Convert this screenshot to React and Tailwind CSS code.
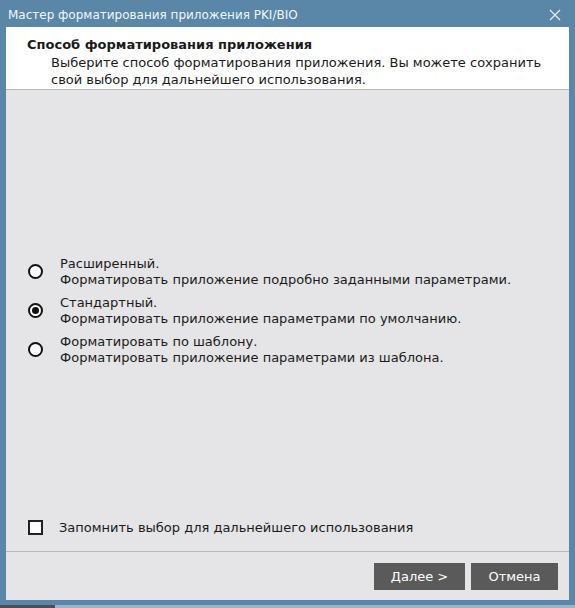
import { useState } from 'react'

const font = { fontFamily: '"DejaVu Sans", "Noto Sans", sans-serif' }

const options = [
  { id: 'ext', title: 'Расширенный.', desc: 'Форматировать приложение подробно заданными параметрами.' },
  { id: 'std', title: 'Стандартный.', desc: 'Форматировать приложение параметрами по умолчанию.' },
  { id: 'tpl', title: 'Форматировать по шаблону.', desc: 'Форматировать приложение параметрами из шаблона.' },
]

function Radio({ checked }) {
  return (
    <span className="w-[15px] h-[15px] rounded-full border-2 border-[#111] bg-white flex items-center justify-center shrink-0">
      {checked && <span className="w-[7px] h-[7px] rounded-full bg-[#111]" />}
    </span>
  )
}

export default function App() {
  const [mode, setMode] = useState('std')
  const [remember, setRemember] = useState(false)

  return (
    <div className="w-[575px] h-[608px] bg-[#5a87a8] flex flex-col text-[13px] text-[#1a1a1a]" style={font}>
      {/* заголовок окна */}
      <div className="h-[27px] flex items-center justify-between pl-[8px] pr-[14px] text-white/95 text-[12px] shrink-0">
        <span className="pt-[2px]">Мастер форматирования приложения PKI/BIO</span>
        <svg width="12" height="12" viewBox="0 0 12 12" className="mt-[2px]">
          <path d="M1 1 L11 11 M11 1 L1 11" stroke="#e8eef3" strokeWidth="1.2" />
        </svg>
      </div>

      <div className="mx-[6px] h-[573px] bg-[#e5e5e7] flex flex-col shrink-0">
        {/* шапка */}
        <div className="h-[63px] bg-white border-b border-[#b9b9bb] pt-[9px] pl-[21px] shrink-0">
          <div className="font-bold leading-[18px]">Способ форматирования приложения</div>
          <div className="pl-[24px] pt-[1px] leading-[16.5px]">
            Выберите способ форматирования приложения. Вы можете сохранить<br />
            свой выбор для дальнейшего использования.
          </div>
        </div>

        {/* варианты */}
        <div className="flex-1 flex flex-col justify-center pt-[26px] pl-[22px] gap-[7px]">
          {options.map(o => (
            <label key={o.id} className="flex items-center gap-[11px] cursor-pointer" onClick={() => setMode(o.id)}>
              <Radio checked={mode === o.id} />
              <div className="leading-[16px] pl-[6px]">
                <div>{o.title}</div>
                <div>{o.desc}</div>
              </div>
            </label>
          ))}
        </div>

        <label className="h-[46px] flex items-center pl-[22px] pb-[1px] gap-[16px] cursor-pointer shrink-0" onClick={() => setRemember(!remember)}>
          <span className="w-[15px] h-[15px] border-2 border-[#222] bg-white flex items-center justify-center">
            {remember && <span className="text-[11px] leading-none">✓</span>}
          </span>
          <span>Запомнить выбор для дальнейшего использования</span>
        </label>

        {/* кнопки */}
        <div className="h-[49px] border-t border-[#b9b9bb] flex items-start justify-end gap-[6px] pt-[11px] pr-[11px] shrink-0">
          <button className="w-[91px] h-[27px] bg-[#5a5a5a] text-white">Далее &gt;</button>
          <button className="w-[87px] h-[27px] bg-[#5a5a5a] text-white">Отмена</button>
        </div>
      </div>

      <div className="h-[5px] shrink-0" />
      <div className="flex-1 flex">
        <div className="w-[55px] bg-[#4a4f55]" />
        <div className="flex-1 bg-[#9fb3c4]" />
      </div>
    </div>
  )
}
